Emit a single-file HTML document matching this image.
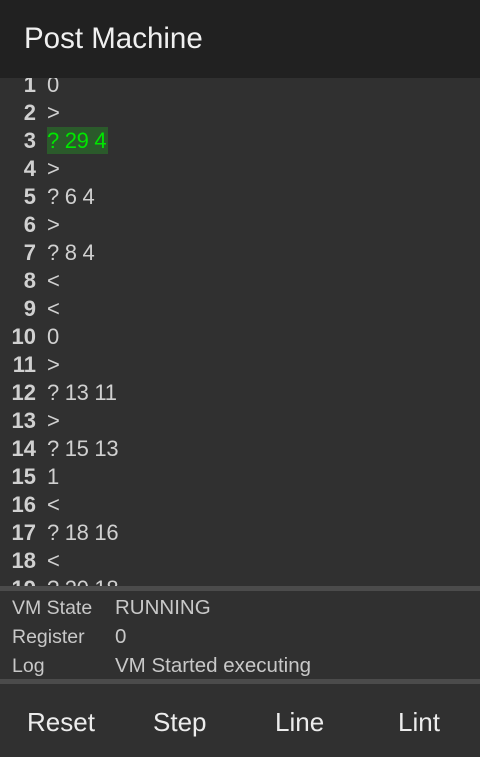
<!DOCTYPE html>
<html><head><style>
*{margin:0;padding:0;box-sizing:border-box}
body{width:480px;height:757px;background:#303030;font-family:"Liberation Sans",sans-serif;overflow:hidden;position:relative;color:#d0d0d0}
.hdr{position:absolute;top:0;left:0;width:480px;height:78px;background:#212121;color:#f0f0f0;font-size:29.5px;line-height:78px;padding-left:24px}
.code{position:absolute;top:78px;left:0;width:480px;height:508px;overflow:hidden}
.inner{position:absolute;top:-7px;left:0}
.row{height:28px;line-height:28px;font-size:22px;white-space:nowrap;position:relative}
.n{position:absolute;left:-4px;width:40px;text-align:right;font-weight:bold;color:#d0d0d0}
.c{position:absolute;left:47px;color:#d0d0d0;letter-spacing:-0.3px}
.hl{background:#2b5a2b;color:#00e600;display:inline-block;height:27px;padding-right:2px}
.div{position:absolute;left:0;width:480px;height:5px;background:#4b4b4b}
.st{position:absolute;left:12px;font-size:19.5px;color:#c8c8c8}
.sv{position:absolute;left:115px;font-size:20.5px;color:#c8c8c8}
.btn{position:absolute;top:707px;font-size:26px;color:#ececec}
</style></head><body>
<div class="hdr">Post Machine</div>
<div class="code"><div class="inner">
<div class="row"><span class="n">1</span><span class="c">0</span></div>
<div class="row"><span class="n">2</span><span class="c">&gt;</span></div>
<div class="row"><span class="n">3</span><span class="c"><span class="hl">? 29 4</span></span></div>
<div class="row"><span class="n">4</span><span class="c">&gt;</span></div>
<div class="row"><span class="n">5</span><span class="c">? 6 4</span></div>
<div class="row"><span class="n">6</span><span class="c">&gt;</span></div>
<div class="row"><span class="n">7</span><span class="c">? 8 4</span></div>
<div class="row"><span class="n">8</span><span class="c">&lt;</span></div>
<div class="row"><span class="n">9</span><span class="c">&lt;</span></div>
<div class="row"><span class="n">10</span><span class="c">0</span></div>
<div class="row"><span class="n">11</span><span class="c">&gt;</span></div>
<div class="row"><span class="n">12</span><span class="c">? 13 11</span></div>
<div class="row"><span class="n">13</span><span class="c">&gt;</span></div>
<div class="row"><span class="n">14</span><span class="c">? 15 13</span></div>
<div class="row"><span class="n">15</span><span class="c">1</span></div>
<div class="row"><span class="n">16</span><span class="c">&lt;</span></div>
<div class="row"><span class="n">17</span><span class="c">? 18 16</span></div>
<div class="row"><span class="n">18</span><span class="c">&lt;</span></div>
<div class="row"><span class="n">19</span><span class="c">? 20 18</span></div>
</div></div>
<div class="div" style="top:586px"></div>
<div class="st" style="top:597px">VM State</div><div class="sv" style="top:596px">RUNNING</div>
<div class="st" style="top:626px">Register</div><div class="sv" style="top:625px">0</div>
<div class="st" style="top:655px">Log</div><div class="sv" style="top:654px">VM Started executing</div>
<div class="div" style="top:679px"></div>
<div class="btn" style="left:27px">Reset</div>
<div class="btn" style="left:153px">Step</div>
<div class="btn" style="left:275px">Line</div>
<div class="btn" style="left:398px">Lint</div>
</body></html>
